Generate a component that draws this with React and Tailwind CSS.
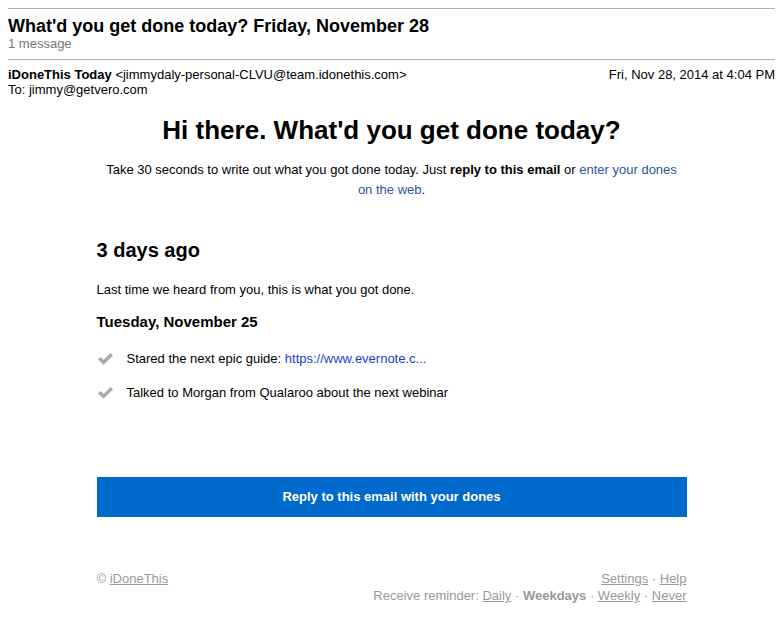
import React from 'react';

function Check() {
  return (
    <svg width="17" height="14" viewBox="0 0 17 14" className="shrink-0">
      <path d="M1 7.5 L3.6 5 L6.6 8 L13.6 1 L16 3.5 L6.6 12.8 Z" fill="#a8a8a8" />
    </svg>
  );
}

export default function App() {
  const font = { fontFamily: '"Liberation Sans", Arial, sans-serif' };
  return (
    <div className="bg-white text-black min-h-screen px-2" style={font}>
      {/* Thread header */}
      <div className="pt-2">
        <div className="border-t border-[#b0b0b0]" />
        <h1 className="text-[18px] font-bold leading-[20px] mt-[7px]">
          What'd you get done today? Friday, November 28
        </h1>
        <div className="text-[13px] text-[#777] leading-[16px]">1 message</div>
        <div className="border-t border-[#b0b0b0] mt-[7px]" />
      </div>

      {/* Message meta */}
      <div className="flex justify-between text-[13px] leading-[15px] mt-[7px]">
        <div>
          <div>
            <span className="font-bold">iDoneThis Today</span>{' '}
            <span>&lt;jimmydaly-personal-CLVU@team.idonethis.com&gt;</span>
          </div>
          <div>To: jimmy@getvero.com</div>
        </div>
        <div>Fri, Nov 28, 2014 at 4:04 PM</div>
      </div>

      {/* Email body */}
      <div className="w-[590px] mx-auto">
        <h2 className="text-[26px] font-bold text-center leading-[32px] mt-[17px]">
          Hi there. What'd you get done today?
        </h2>
        <p className="text-[13px] leading-[20px] text-center mt-[14px] w-[580px] mx-auto">
          Take 30 seconds to write out what you got done today. Just{' '}
          <span className="font-bold">reply to this email</span> or{' '}
          <span className="text-[#2b5797]">enter your dones on the web</span>.
        </p>

        <h3 className="text-[20px] font-bold leading-[24px] mt-[38px]">3 days ago</h3>
        <p className="text-[13px] leading-[18px] mt-[19px]">
          Last time we heard from you, this is what you got done.
        </p>
        <h4 className="text-[15px] font-bold leading-[20px] mt-[13px]">Tuesday, November 25</h4>

        <ul className="mt-[18px] flex flex-col gap-[16px] text-[13px] leading-[18px]">
          <li className="flex items-center gap-[13px]">
            <Check />
            <span>
              Stared the next epic guide:{' '}
              <span className="text-[#1a3fd4]">https://www.evernote.c...</span>
            </span>
          </li>
          <li className="flex items-center gap-[13px]">
            <Check />
            <span>Talked to Morgan from Qualaroo about the next webinar</span>
          </li>
        </ul>

        <div className="mt-[75px] h-[40px] bg-[#0069cc] flex items-center justify-center text-white text-[13px] font-bold">
          Reply to this email with your dones
        </div>

        <div className="mt-[53px] flex justify-between text-[13px] leading-[17px] text-[#999]">
          <div>
            © <span className="underline">iDoneThis</span>
          </div>
          <div className="text-right">
            <div>
              <span className="underline">Settings</span> · <span className="underline">Help</span>
            </div>
            <div>
              Receive reminder: <span className="underline">Daily</span> ·{' '}
              <span className="font-bold">Weekdays</span> ·{' '}
              <span className="underline">Weekly</span> · <span className="underline">Never</span>
            </div>
          </div>
        </div>
      </div>
    </div>
  );
}
